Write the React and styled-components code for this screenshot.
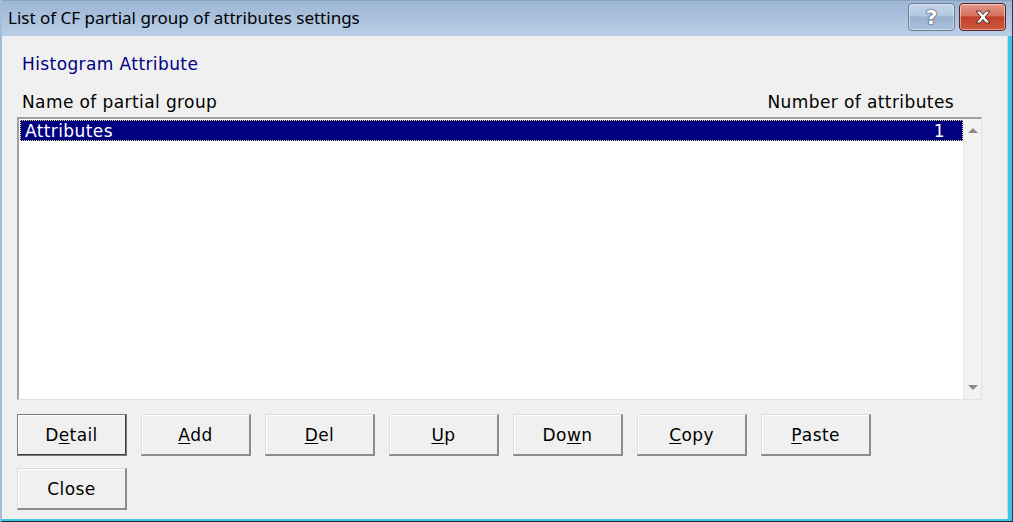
import styled, { createGlobalStyle } from "styled-components";

const Global = createGlobalStyle`
  html, body {
    margin: 0;
    padding: 0;
    background: #f0f0f0;
  }
`;

const Window = styled.div`
  width: 1013px;
  height: 522px;
  box-sizing: border-box;
  display: flex;
  flex-direction: column;
  background: #f0f0f0;
  border-left: 2px solid #a3bcd8;
  border-right: 1px solid #2b3a4a;
  border-bottom: 1px solid #1d2a33;
  box-shadow: inset -4px -2px 0 #3cc6e6, inset -5px 0 0 #c5d7ea;
  font-family: "DejaVu Sans", Tahoma, sans-serif;
  letter-spacing: 0.4px;
`;

const TitleBar = styled.div`
  height: 36px;
  flex: none;
  display: flex;
  align-items: center;
  padding: 0 6px 0 6px;
  background: linear-gradient(#9db6d5, #b9cfe7);
  border-top: 1px solid #8aa2c0;
  box-sizing: border-box;
  letter-spacing: 0;
`;

const Title = styled.div`
  flex: 1;
  font-family: "Noto Sans", "Open Sans", sans-serif;
  font-size: 17px;
  color: #000;
  padding-bottom: 2px;
`;

const CaptionButton = styled.div`
  width: 47px;
  height: 28px;
  margin-left: 4px;
  margin-top: -4px;
  box-sizing: border-box;
  border: 1px solid ${(p) => (p.close ? "#5b2424" : "#6a7b94")};
  border-radius: 4px;
  display: flex;
  align-items: center;
  justify-content: center;
  background: ${(p) =>
    p.close
      ? "linear-gradient(#e29a8c 0%, #d6705d 45%, #c1402a 50%, #cf5a3f 100%)"
      : "linear-gradient(#c5d6ea 0%, #b3c8e1 45%, #9ab2d0 50%, #a9c1dc 100%)"};
  box-shadow: inset 0 0 0 1px rgba(255, 255, 255, 0.45);
  color: #fff;
  font-family: "DejaVu Sans", sans-serif;
  font-weight: bold;
  font-size: 20px;
  text-shadow: 0 0 2px #3a4a60, 0 0 1px #3a4a60, 0 0 1px #3a4a60;
`;

const Body = styled.div`
  flex: 1;
  display: flex;
  flex-direction: column;
  padding: 18px 30px 0 15px;
`;

const Section = styled.div`
  color: #000080;
  font-size: 17px;
  padding-left: 5px;
  height: 22px;
`;

const Headers = styled.div`
  display: flex;
  justify-content: space-between;
  font-size: 17px;
  margin-top: 16px;
  padding: 0 28px 0 5px;
  height: 24px;
`;

const ListBox = styled.div`
  margin-top: 1px;
  height: 283px;
  box-sizing: border-box;
  display: flex;
  background: #fff;
  border-top: 2px solid #a0a0a0;
  border-left: 2px solid #a0a0a0;
  border-right: 1px solid #e3e3e3;
  border-bottom: 1px solid #e3e3e3;
`;

const Rows = styled.div`
  flex: 1;
  padding: 1px 0 0 1px;
`;

const Row = styled.div`
  height: 21px;
  box-sizing: border-box;
  display: flex;
  justify-content: space-between;
  align-items: center;
  padding: 0 18px 0 5px;
  font-size: 17px;
  background: ${(p) => (p.selected ? "#000080" : "transparent")};
  color: ${(p) => (p.selected ? "#fff" : "#000")};
  outline: ${(p) => (p.selected ? "1px dotted #e8e070" : "none")};
  outline-offset: -1px;
`;

const ScrollBar = styled.div`
  width: 17px;
  display: flex;
  flex-direction: column;
  justify-content: space-between;
  align-items: center;
  background: #f2f2f2;
  border-left: 1px solid #e8e8e8;
  padding: 9px 0 9px;
`;

const Arrow = styled.div`
  width: 0;
  height: 0;
  border-left: 5px solid transparent;
  border-right: 5px solid transparent;
  ${(p) =>
    p.down
      ? "border-top: 5px solid #8a8a8a;"
      : "border-bottom: 5px solid #8a8a8a;"}
`;

const ButtonRow = styled.div`
  display: flex;
  gap: 14px;
  margin-top: 14px;
`;

const Button = styled.div`
  width: 110px;
  height: 42px;
  box-sizing: border-box;
  display: flex;
  align-items: center;
  justify-content: center;
  font-size: 17px;
  color: #000;
  background: #f0f0f0;
  border-top: 1px solid #dcdcdc;
  border-left: 1px solid #dcdcdc;
  border-right: ${(p) => (p.primary ? "2px solid #404040" : "2px solid #8c8c8c")};
  border-bottom: ${(p) => (p.primary ? "2px solid #404040" : "2px solid #8c8c8c")};
  box-shadow: inset 1px 1px 0 #fff;
  outline: ${(p) => (p.primary ? "1px solid #7a7a7a" : "none")};
  outline-offset: -1px;

  u {
    text-decoration: underline;
    text-underline-offset: 2px;
  }
`;

const CloseRow = styled(ButtonRow)`
  margin-top: 12px;
`;

const CloseIcon = () => (
  <svg width="20" height="16" viewBox="0 0 20 16">
    <path
      d="M3 2 L7 2 L10 5.5 L13 2 L17 2 L12 8 L17 14 L13 14 L10 10.5 L7 14 L3 14 L8 8 Z"
      fill="#fff"
      stroke="#4a3030"
      strokeWidth="1"
      strokeLinejoin="round"
    />
  </svg>
);

const buttons = [
  ["D", "e", "tail"],
  ["", "A", "dd"],
  ["", "D", "el"],
  ["", "U", "p"],
  ["Do", "w", "n"],
  ["", "C", "opy"],
  ["", "P", "aste"],
];

export default function App() {
  return (
    <>
      <Global />
      <Window>
        <TitleBar>
          <Title>List of CF partial group of attributes settings</Title>
          <CaptionButton>?</CaptionButton>
          <CaptionButton close>
            <CloseIcon />
          </CaptionButton>
        </TitleBar>
        <Body>
          <Section>Histogram Attribute</Section>
          <Headers>
            <span>Name of partial group</span>
            <span>Number of attributes</span>
          </Headers>
          <ListBox>
            <Rows>
              <Row selected>
                <span>Attributes</span>
                <span>1</span>
              </Row>
            </Rows>
            <ScrollBar>
              <Arrow />
              <Arrow down />
            </ScrollBar>
          </ListBox>
          <ButtonRow>
            {buttons.map(([a, b, c], i) => (
              <Button key={i} primary={i === 0}>
                {a}
                <u>{b}</u>
                {c}
              </Button>
            ))}
          </ButtonRow>
          <CloseRow>
            <Button>Close</Button>
          </CloseRow>
        </Body>
      </Window>
    </>
  );
}
